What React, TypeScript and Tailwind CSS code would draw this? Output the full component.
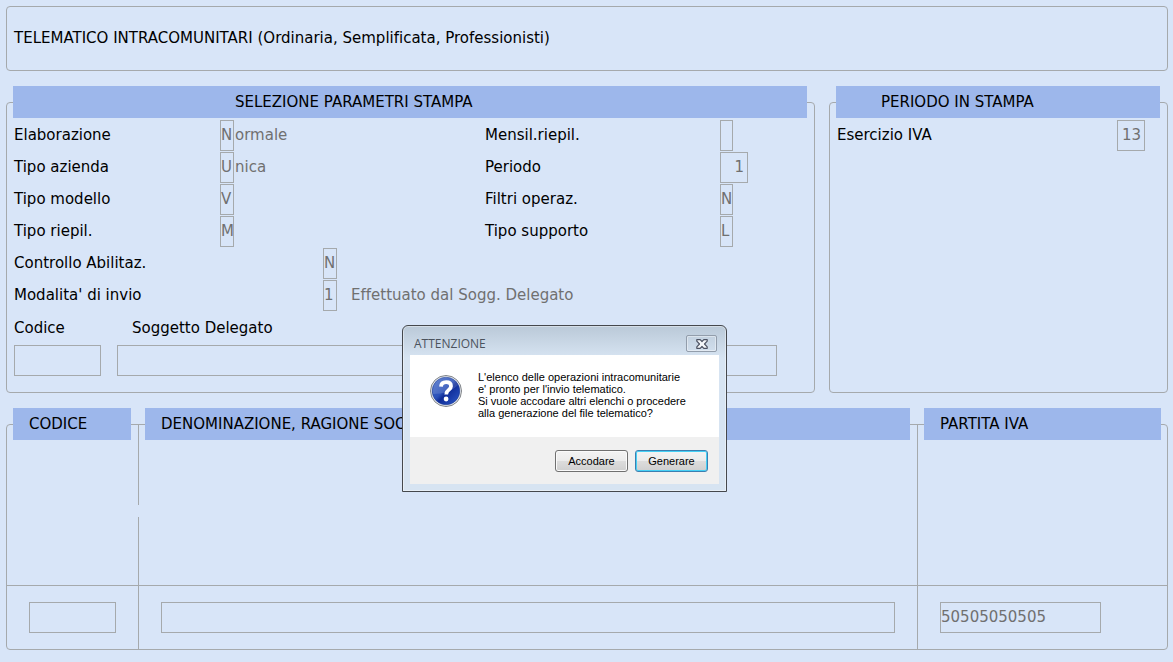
import type { ReactNode } from 'react';

const fieldClass = 'block h-[31px] border border-[#a5a9ac] bg-transparent px-0 pt-0 pb-0.5 text-[15px] text-[#707070] outline-none';
const panelClass = 'min-w-0 rounded-[4px] border border-[#a5a9ac] pr-[7px] pl-1.5';
const legendClass = 'flex h-8 w-full items-center bg-[#9db7eb] text-[15px]';

type RowProps = {
  id: string;
  label: string;
  value: string;
  hint?: string;
  labelWidth: string;
  fieldWidth?: string;
};

function Row({ id, label, value, hint, labelWidth, fieldWidth = 'w-3.5' }: RowProps) {
  return (
    <div className="flex h-8 items-start">
      <label htmlFor={id} className={`${labelWidth} shrink-0 pl-px leading-[30px]`}>
        {label}
      </label>
      <input id={id} defaultValue={value} readOnly className={`${fieldClass} ${fieldWidth}`} />
      {hint && <span className="pl-px leading-[30px] text-[#707070]">{hint}</span>}
    </div>
  );
}

function HeaderCell({ children, divider = true }: { children: ReactNode; divider?: boolean }) {
  return (
    <th scope="col" className="relative p-0 px-[7px] text-left font-normal">
      {divider && <span className="absolute top-4 bottom-0 left-0 border-l border-[#a5a9ac]" />}
      <div className="flex h-8 items-center overflow-hidden bg-[#9db7eb] pl-4 whitespace-nowrap">{children}</div>
    </th>
  );
}

function QuestionIcon() {
  return (
    <svg width="34" height="34" viewBox="0 0 34 34" aria-hidden="true">
      <defs>
        <linearGradient id="ball" x1="0" y1="0" x2="1" y2="1">
          <stop offset="0%" stopColor="#4a72cc" />
          <stop offset="45%" stopColor="#2a50b8" />
          <stop offset="55%" stopColor="#0f2c98" />
          <stop offset="100%" stopColor="#2f5ccb" />
        </linearGradient>
      </defs>
      <circle cx="17" cy="17" r="15.5" fill="#eceef0" stroke="#7f8388" strokeWidth="1" />
      <circle cx="17" cy="17" r="13.8" fill="url(#ball)" stroke="#1b3a94" strokeWidth="0.6" />
      <path d="M4 16 A13 13 0 0 1 29 11 Q20 20 4 20 Z" fill="#ffffff" opacity="0.14" />
      <path
        d="M12 12.6 C12.2 9.4 14.4 8.2 17.2 8.2 C20.2 8.2 22 9.8 22 12.2 C22 16 17.2 15.8 17.2 20.4"
        fill="none"
        stroke="#ffffff"
        strokeWidth="3.8"
      />
      <circle cx="17.1" cy="25" r="2.4" fill="#ffffff" />
    </svg>
  );
}

function CloseIcon() {
  return (
    <svg width="12" height="10" viewBox="0 0 12 10" aria-hidden="true">
      <path
        d="M0.8 0.7 H4.2 L6 2.5 L7.8 0.7 H11.2 V2.2 L8.5 5 L11.2 7.8 V9.3 H7.8 L6 7.5 L4.2 9.3 H0.8 V7.8 L3.5 5 L0.8 2.2 Z"
        fill="#f4f7fa"
        stroke="#4c5262"
        strokeWidth="1.2"
        strokeLinejoin="round"
      />
    </svg>
  );
}

function AlertDialog() {
  return (
    <div
      role="dialog"
      aria-labelledby="alert-title"
      className="absolute top-[325px] left-[402px] w-[325px] rounded-t-[6px] border border-[#45484d] bg-[#d7e4f2] bg-[linear-gradient(#bac9d8,#d7e4f2_32px)] px-[7px] pb-[7px] font-['Liberation_Sans',sans-serif] text-[11px] shadow-[inset_0_0_0_1px_rgba(255,255,255,0.4)]"
    >
      <div className="flex h-[29px] items-center justify-between pt-1.5 pr-0.5 pl-1">
        <h2 id="alert-title" className="font-['Open_Sans',sans-serif] text-[12px] text-[#4b535d]">
          ATTENZIONE
        </h2>
        <button
          type="button"
          aria-label="Chiudi"
          className="flex h-[17px] w-[31px] items-center justify-center rounded-[2px] border border-[#929dab] shadow-[inset_0_0_0_1px_rgba(255,255,255,0.4)]"
        >
          <CloseIcon />
        </button>
      </div>
      <div className="flex h-[82px] bg-white pl-[19px]">
        <div className="w-[49px] shrink-0 pt-[19px]">
          <QuestionIcon />
        </div>
        <p className="pt-4 leading-[12px] whitespace-nowrap text-black">
          L'elenco delle operazioni intracomunitarie
          <br />
          e' pronto per l'invio telematico.
          <br />
          Si vuole accodare altri elenchi o procedere
          <br />
          alla generazione del file telematico?
        </p>
      </div>
      <div className="flex h-[47px] justify-end gap-[7px] bg-[#f0f0f0] pt-[13px] pr-[11px]">
        <button
          type="button"
          className="h-[22px] w-[73px] rounded-[3px] border border-[#707070] bg-[linear-gradient(#f3f3f3,#ebebeb_50%,#dddddd_50%,#cfcfcf)] shadow-[inset_0_0_0_1px_#fafafa]"
        >
          Accodare
        </button>
        <button
          type="button"
          className="h-[22px] w-[73px] rounded-[3px] border border-[#3c7fb1] bg-[linear-gradient(#f3f3f3,#ebebeb_50%,#dddddd_50%,#cfcfcf)] shadow-[inset_0_0_0_1px_#46d0f5]"
        >
          Generare
        </button>
      </div>
    </div>
  );
}

export default function App() {
  return (
    <main className="relative flex min-h-screen flex-col gap-[15px] bg-[#d8e5f8] pt-1.5 pr-[5px] pb-3 pl-1.5 font-['DejaVu_Sans',sans-serif] text-[15px] text-black [font-variant-ligatures:none]">
      <header className="flex h-[65px] items-center rounded-[4px] border border-[#a5a9ac] pl-[7px]">
        <h1>TELEMATICO INTRACOMUNITARI (Ordinaria, Semplificata, Professionisti)</h1>
      </header>

      <div className="grid grid-cols-[809fr_339fr] gap-3.5">
        <fieldset className={panelClass}>
          <legend className={`${legendClass} pl-[222px]`}>SELEZIONE PARAMETRI STAMPA</legend>
          <div className="pt-0.5 pb-4">
            <div className="flex">
              <div className="w-[471px] shrink-0">
                <Row id="elaborazione" label="Elaborazione" value="N" hint="ormale" labelWidth="w-[207px]" />
                <Row id="azienda" label="Tipo azienda" value="U" hint="nica" labelWidth="w-[207px]" />
                <Row id="modello" label="Tipo modello" value="V" labelWidth="w-[207px]" />
                <Row id="riepil" label="Tipo riepil." value="M" labelWidth="w-[207px]" />
              </div>
              <div>
                <Row id="mensile" label="Mensil.riepil." value="" labelWidth="w-[236px]" fieldWidth="w-[13px]" />
                <Row id="periodo" label="Periodo" value="1" labelWidth="w-[236px]" fieldWidth="w-7 pr-[3px] text-right" />
                <Row id="filtri" label="Filtri operaz." value="N" labelWidth="w-[236px]" fieldWidth="w-[13px]" />
                <Row id="supporto" label="Tipo supporto" value="L" labelWidth="w-[236px]" fieldWidth="w-[13px]" />
              </div>
            </div>
            <Row id="abilitaz" label="Controllo Abilitaz." value="N" labelWidth="w-[310px]" />
            <div className="flex">
              <Row id="invio" label="Modalita' di invio" value="1" labelWidth="w-[310px]" />
              <span className="pl-3.5 leading-[30px] text-[#707070]">Effettuato dal Sogg. Delegato</span>
            </div>
            <div className="flex gap-4 pr-[30px] pl-px">
              <div className="w-[87px] shrink-0">
                <label htmlFor="codice" className="block h-[33px] leading-8">
                  Codice
                </label>
                <input id="codice" readOnly className={`${fieldClass} w-full`} />
              </div>
              <div className="grow">
                <label htmlFor="delegato" className="block h-[33px] pl-[15px] leading-8">
                  Soggetto Delegato
                </label>
                <input id="delegato" readOnly className={`${fieldClass} w-full`} />
              </div>
            </div>
          </div>
        </fieldset>

        <fieldset className={panelClass}>
          <legend className={`${legendClass} pl-[45px]`}>PERIODO IN STAMPA</legend>
          <div className="flex justify-between pt-0.5 pr-[15px] pl-px">
            <label htmlFor="esercizio" className="leading-[30px]">
              Esercizio IVA
            </label>
            <input id="esercizio" defaultValue="13" readOnly className={`${fieldClass} w-7 pr-[3px] text-right`} />
          </div>
        </fieldset>
      </div>

      <section className="relative">
        {/* Frame that runs behind the middle of the column headings */}
        <div className="pointer-events-none absolute inset-x-0 top-4 bottom-0 rounded-[4px] border border-[#a5a9ac]" />
        <table className="relative w-full table-fixed border-separate border-spacing-0">
          <colgroup>
            <col className="w-[132px]" />
            <col />
            <col className="w-[251px]" />
          </colgroup>
          <thead>
            <tr>
              <HeaderCell divider={false}>CODICE</HeaderCell>
              <HeaderCell>DENOMINAZIONE, RAGIONE SOCIALE</HeaderCell>
              <HeaderCell>PARTITA IVA</HeaderCell>
            </tr>
          </thead>
          <tbody>
            <tr className="h-[145px]">
              <td />
              <td className="relative border-l border-[#a5a9ac] p-0">
                <span className="absolute top-[65px] -left-px h-3 w-px bg-[#d8e5f8]" />
              </td>
              <td className="border-l border-[#a5a9ac]" />
            </tr>
            <tr>
              <td className="border-t border-[#a5a9ac] pt-4 pr-0 pb-[17px] pl-[23px]">
                <input aria-label="Codice" readOnly className={`${fieldClass} w-[87px]`} />
              </td>
              <td className="border-t border-l border-[#a5a9ac] px-[22px] pt-4 pb-[17px]">
                <input aria-label="Denominazione" readOnly className={`${fieldClass} w-full`} />
              </td>
              <td className="border-t border-l border-[#a5a9ac] pt-4 pb-[17px] pl-[22px]">
                <input aria-label="Partita IVA" defaultValue="50505050505" readOnly className={`${fieldClass} w-[161px]`} />
              </td>
            </tr>
          </tbody>
        </table>
      </section>

      <AlertDialog />
    </main>
  );
}
